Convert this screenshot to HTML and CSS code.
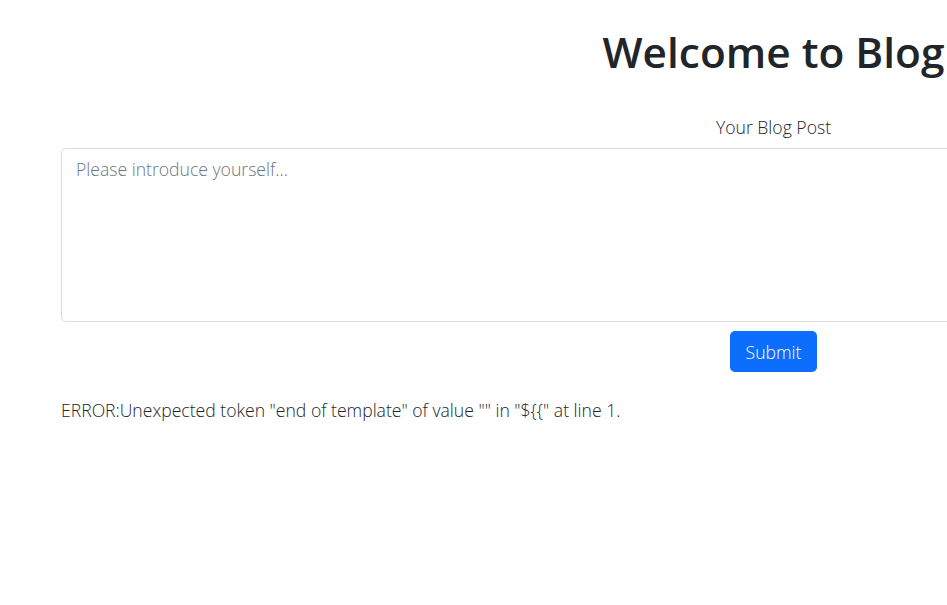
FILE: index.html
```html
<!DOCTYPE html>
<html lang="en">
<head>
    <meta charset="UTF-8">
    <meta name="viewport" content="width=device-width, initial-scale=1.0">
    <title>Blog</title>
    <link rel="stylesheet" href="styles.css">
</head>
<body>
    <div class="container">
        <h1>Welcome to Blog</h1>
        <form class="post-form">
            <label for="post-body">Your Blog Post</label>
            <textarea id="post-body" placeholder="Please introduce yourself..."></textarea>
            <button type="button">Submit</button>
        </form>
        <p class="error">ERROR:Unexpected token "end of template" of value "" in "${{" at line 1.</p>
    </div>
</body>
</html>
```

FILE: styles.css
```css
body {
    font-family: "Open Sans", "Noto Sans", sans-serif;
    font-size: 17.6px;
    font-weight: 300;
    line-height: 1.5;
    color: #212529;
    margin: 0;
    padding: 0;
    background-color: #fff;
    overflow: hidden;
}
.container {
    width: 1425px;
    margin-left: 61px;
    padding-top: 27px;
}
h1 {
    text-align: center;
    font-size: 42.4px;
    font-weight: 600;
    line-height: 1.2;
    margin: 0 0 36px;
}
.post-form {
    display: flex;
    flex-direction: column;
    align-items: center;
}
.post-form label {
    margin-bottom: 8px;
}
.post-form textarea {
    align-self: stretch;
    height: 174px;
    box-sizing: border-box;
    padding: 7px 14px;
    font-family: inherit;
    font-size: 17.6px;
    font-weight: 300;
    line-height: 1.5;
    color: #212529;
    border: 1px solid #d9dde1;
    border-radius: 5px;
    resize: none;
    margin: 0;
}
.post-form textarea::placeholder {
    color: #6c757d;
}
button {
    margin-top: 9px;
    height: 41px;
    padding: 0 15.5px;
    font-family: inherit;
    font-size: 17.6px;
    font-weight: 300;
    background-color: #0d6efd;
    color: #fff;
    border: none;
    border-radius: 5px;
}
.error {
    margin: 25px 0 0;
}
```
